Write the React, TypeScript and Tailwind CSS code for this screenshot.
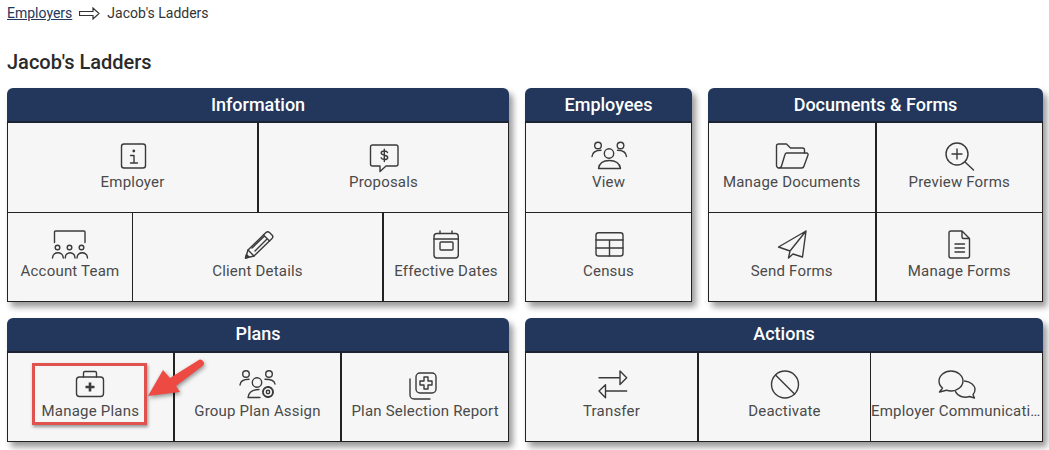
// App.tsx
import React from 'react';

const font = { fontFamily: 'Roboto, "Liberation Sans", sans-serif' };

// Shared wrapper for the tile icons, 32 x 32 drawing box (some spill a little over the edge)
const Icon: React.FC<{ children: React.ReactNode }> = ({ children }) => (
  <svg
    className="overflow-visible"
    width="32"
    height="32"
    viewBox="0 0 32 32"
    fill="none"
    stroke="#3a3a3a"
    strokeWidth="1.4"
    strokeLinecap="round"
    strokeLinejoin="round"
  >
    {children}
  </svg>
);

const InfoIcon = () => (
  <Icon>
    <rect x="4.500" y="6" width="24" height="24" rx="2.500" />
    <path d="M13.500 17.500h3.500v7.500M13.500 25h7" />
    <circle cx="16.800" cy="13" r="0.700" fill="#3a3a3a" />
  </Icon>
);

const ProposalIcon = () => (
  <Icon>
    <path d="M4.500 7h23.500a2 2 0 0 1 2 2v17a2 2 0 0 1-2 2H18l-6 5.500V28H4.500a2 2 0 0 1-2-2V9a2 2 0 0 1 2-2z" />
    <path d="M19.500 14.500c-.4-1-1.700-1.500-3.200-1.500-1.900 0-3.100.8-3.100 2.100 0 2.900 6.500 1.300 6.500 4.300 0 1.300-1.300 2.100-3.200 2.100-1.600 0-3-.6-3.400-1.700M16.300 11.200v12.300" />
  </Icon>
);

const TeamIcon = () => (
  <Icon>
    <path d="M.5 15.500V5a1 1 0 0 1 1-1H30a1 1 0 0 1 1 1v10.500" />
    <circle cx="3.500" cy="20.500" r="2.300" />
    <circle cx="15.500" cy="20.500" r="2.300" />
    <circle cx="27.500" cy="20.500" r="2.300" />
    <path d="M-1.500 31c.3-7 10.500-7 10.800 0M11.200 31c.2-7 9.600-7 9.800 0M23 31c.3-7 10.200-7 10.500 0" />
  </Icon>
);

const PencilIcon = () => (
  <Icon>
    <path d="M3.500 31l2.500-8L24 5.500a2.500 2.500 0 0 1 3.500 0l2.500 2.500a2.500 2.500 0 0 1 0 3.500L12 29z" />
    <path d="M6 23l6 6M21.500 8l6 6M10 21l12-11.500M13 24l11.500-11.500" />
    <path d="M3.500 31l1-3.500 2.500 2.500z" fill="#3a3a3a" />
  </Icon>
);

const CalendarIcon = () => (
  <Icon>
    <rect x="4" y="6.500" width="24.300" height="24.500" rx="3" />
    <path d="M10 4v2.500M22 4v2.500M4 12h24.300" />
    <rect x="10" y="15" width="13" height="8" rx="1" />
  </Icon>
);

const PeopleIcon = () => (
  <Icon>
    <circle cx="5" cy="7.500" r="3.300" />
    <circle cx="27.500" cy="7.500" r="3.300" />
    <circle cx="16" cy="15.500" r="4.700" />
    <path d="M-1 18.500c.4-4 4-6.200 9-6.200M33.500 18.500c-.4-4-4-6.200-9-6.200" />
    <path d="M5.500 30.500c.8-5.500 5-8 10.800-8 5.800 0 10.200 2.500 11.200 8z" />
  </Icon>
);

const TableIcon = () => (
  <Icon>
    <rect x="3" y="5.700" width="27" height="23.300" rx="2.500" />
    <path d="M3 13h27M3 21h27M16.500 13v16" />
  </Icon>
);

const FolderIcon = () => (
  <Icon>
    <path d="M3 30a2.500 2.500 0 0 1-2.500-2.500V8a2 2 0 0 1 2-2h8l4 4h12a2 2 0 0 1 2 2v3" />
    <path d="M3 30a2.500 2.500 0 0 0 2.500-2L9 16.500a2 2 0 0 1 1.500-1.500H30.500a1.500 1.500 0 0 1 1.500 2L28 28a2.500 2.500 0 0 1-2.500 2z" />
  </Icon>
);

const ZoomPlusIcon = () => (
  <Icon>
    <circle cx="14" cy="16" r="11" />
    <path d="M14 11v10M9 16h10M22 24l8.500 8" />
  </Icon>
);

const PlaneIcon = () => (
  <Icon>
    <path d="M30 4L2.500 20 14 24l-1.500 7 4.500-4 9.500 3zM30 4L14 24" />
  </Icon>
);

const FormIcon = () => (
  <Icon>
    <path d="M19 4H8a2 2 0 0 0-2 2v23a2 2 0 0 0 2 2h16.500a2 2 0 0 0 2-2V11.500zM19 4v6a1.500 1.500 0 0 0 1.500 1.500h6" />
    <path d="M12 17h9.500M12 21h9.500M12 25h9.500" />
  </Icon>
);

const MedKitIcon = () => (
  <Icon>
    <rect x="2.500" y="10" width="27" height="19.500" rx="3" />
    <path d="M9.500 10V6a1.500 1.500 0 0 1 1.500-1.500h10A1.500 1.500 0 0 1 22.500 6v4" />
    <path d="M16 15.500v9M11.500 20h9" strokeWidth="2.600" strokeLinecap="butt" />
  </Icon>
);

const GroupGearIcon = () => (
  <Icon>
    <circle cx="5" cy="7" r="3.300" />
    <circle cx="28" cy="7" r="3.300" />
    <circle cx="16" cy="15.500" r="4.700" />
    <path d="M-1 18c.4-3.500 4-5.700 9-5.700M34 17c-.5-3-4-4.700-10-4.700" />
    <path d="M7 30.500c.6-5 4.500-8 11-8M7 30.500h12" />
    <circle cx="27" cy="25" r="5" strokeDasharray="2 1.100" strokeWidth="1.900" />
    <circle cx="27" cy="25" r="1.700" />
  </Icon>
);

const CopyPlusIcon = () => (
  <Icon>
    <path d="M1 12v16a4 4 0 0 0 4 4h16" />
    <rect x="7" y="6" width="20" height="20" rx="4" />
    <path d="M15 10h4v4h4v4h-4v4h-4v-4h-4v-4h4z" />
  </Icon>
);

const TransferIcon = () => (
  <Icon>
    <path d="M3 10.700h21M24 4l6.700 6.700L24 17.400z" />
    <path d="M30.700 24H9.500M9.500 17.700L3 24l6.500 6.700z" />
  </Icon>
);

const BanIcon = () => (
  <Icon>
    <circle cx="16" cy="17.500" r="13.500" />
    <path d="M6.500 8l19 19" />
  </Icon>
);

const ChatIcon = () => (
  <Icon>
    <path d="M1.500 21c-2.500-2-3.500-4.500-3.500-7C-2 8.500 3.500 4 10 4s12 4.500 12 10-5.500 10-12 10c-1.500 0-3-.2-4.500-.8L-1.500 25z" />
    <path d="M23.500 14c5.500.5 10.500 4 10.500 8.500 0 2-.8 3.800-2 5.200l1.500 3.300-5-1.500c-5.500 1.800-12-.2-14-5" />
  </Icon>
);

type TileProps = {
  icon: React.ReactNode;
  label: string;
  className: string;
};

const Tile: React.FC<TileProps> = ({ icon, label, className }) => (
  <div className={`flex min-w-0 flex-col items-center justify-center border-[#222] ${className}`}>
    {icon}
    <div className="w-full truncate pt-[2px] text-center text-[15px] leading-[20px] tracking-[0.2px] text-[#4a4a4a]">
      {label}
    </div>
  </div>
);

const Panel: React.FC<{ title: string; titleClass: string; children: React.ReactNode }> = ({
  title,
  titleClass,
  children,
}) => (
  <div className="rounded-t-md shadow-[4px_5px_6px_rgba(0,0,0,0.4)]">
    <div
      className={`flex h-[35px] items-center justify-center rounded-t-md border-b-2 border-[#1c2433] bg-[#22375b] text-[18px] font-medium text-white ${titleClass}`}
    >
      {title}
    </div>
    {children}
  </div>
);

export default function App() {
  return (
    <div className="h-[450px] w-[1049px] overflow-hidden bg-white px-[7px]" style={font}>
      {/* Breadcrumb */}
      <div className="flex h-[27px] items-center text-[14px] text-[#333]">
        <span className="text-[#22375b] underline">Employers</span>
        <svg className="mx-[7px]" width="21" height="13" viewBox="0 0 21 13" fill="none" stroke="#333" strokeWidth="1.200">
          <path d="M.5 4.500h13.500V1l6 5.500-6 5.500V8.500H.5z" />
        </svg>
        <span>Jacob's Ladders</span>
      </div>

      <h1 className="pt-[23px] text-[20px] font-medium leading-[24px] text-[#2a2a2a]">Jacob's Ladders</h1>

      {/* Top row */}
      <div className="mt-[14px] grid grid-cols-[502px_167px_335px] gap-x-[16px]">
        <Panel title="Information" titleClass="">
          <div className="grid h-[179px] grid-cols-4 grid-rows-[90px_89px] border-x border-b border-[#222] bg-[#f6f6f7]">
            <Tile className="col-span-2 border-r border-b pb-[5px]" icon={<InfoIcon />} label="Employer" />
            <Tile className="col-span-2 border-b border-l pb-[5px]" icon={<ProposalIcon />} label="Proposals" />
            <Tile className="border-r pb-[7px]" icon={<TeamIcon />} label="Account Team" />
            <Tile className="col-span-2 border-r pb-[7px]" icon={<PencilIcon />} label="Client Details" />
            <Tile className="border-l pb-[7px]" icon={<CalendarIcon />} label="Effective Dates" />
          </div>
        </Panel>

        <Panel title="Employees" titleClass="">
          <div className="grid h-[179px] grid-rows-[90px_89px] border-x border-b border-[#222] bg-[#f6f6f7]">
            <Tile className="border-b pb-[5px]" icon={<PeopleIcon />} label="View" />
            <Tile className="pb-[7px]" icon={<TableIcon />} label="Census" />
          </div>
        </Panel>

        <Panel title="Documents & Forms" titleClass="">
          <div className="grid h-[179px] grid-cols-2 grid-rows-[90px_89px] border-x border-b border-[#222] bg-[#f6f6f7]">
            <Tile className="border-r border-b pb-[5px]" icon={<FolderIcon />} label="Manage Documents" />
            <Tile className="border-b border-l pb-[5px]" icon={<ZoomPlusIcon />} label="Preview Forms" />
            <Tile className="border-r pb-[7px]" icon={<PlaneIcon />} label="Send Forms" />
            <Tile className="border-l pb-[7px]" icon={<FormIcon />} label="Manage Forms" />
          </div>
        </Panel>
      </div>

      {/* Bottom row */}
      <div className="mt-[16px] grid grid-cols-[502px_518px] gap-x-[16px]">
        <Panel title="Plans" titleClass="pb-[2px]">
          <div className="relative grid h-[89px] grid-cols-3 border-x border-b border-[#222] bg-[#f6f6f7]">
            <Tile className="border-r-2 pb-[7px]" icon={<MedKitIcon />} label="Manage Plans" />
            <Tile className="border-r pb-[7px]" icon={<GroupGearIcon />} label="Group Plan Assign" />
            <Tile className="border-l pb-[7px]" icon={<CopyPlusIcon />} label="Plan Selection Report" />

            {/* Red callout over the first tile */}
            <div className="absolute left-[24px] top-[10px] h-[62px] w-[115px] border-[3px] border-[#e0524d] shadow-[1px_2px_3px_rgba(0,0,0,0.4)]" />
            <svg className="absolute left-[138px] top-[5px] drop-shadow-[1px_2px_2px_rgba(0,0,0,0.4)]" width="60" height="40" viewBox="0 0 60 40">
              <path d="M2 38L17 12l7 8L52 2.500a3.500 3.500 0 0 1 4.500 5.500L30 28l4 6z" fill="#ec4a42" />
            </svg>
          </div>
        </Panel>

        <Panel title="Actions" titleClass="pb-[2px]">
          <div className="grid h-[89px] grid-cols-3 border-x border-b border-[#222] bg-[#f6f6f7]">
            <Tile className="border-r pb-[7px]" icon={<TransferIcon />} label="Transfer" />
            <Tile className="border-l pb-[7px]" icon={<BanIcon />} label="Deactivate" />
            <Tile className="border-l pb-[7px]" icon={<ChatIcon />} label="Employer Communications" />
          </div>
        </Panel>
      </div>
    </div>
  );
}
